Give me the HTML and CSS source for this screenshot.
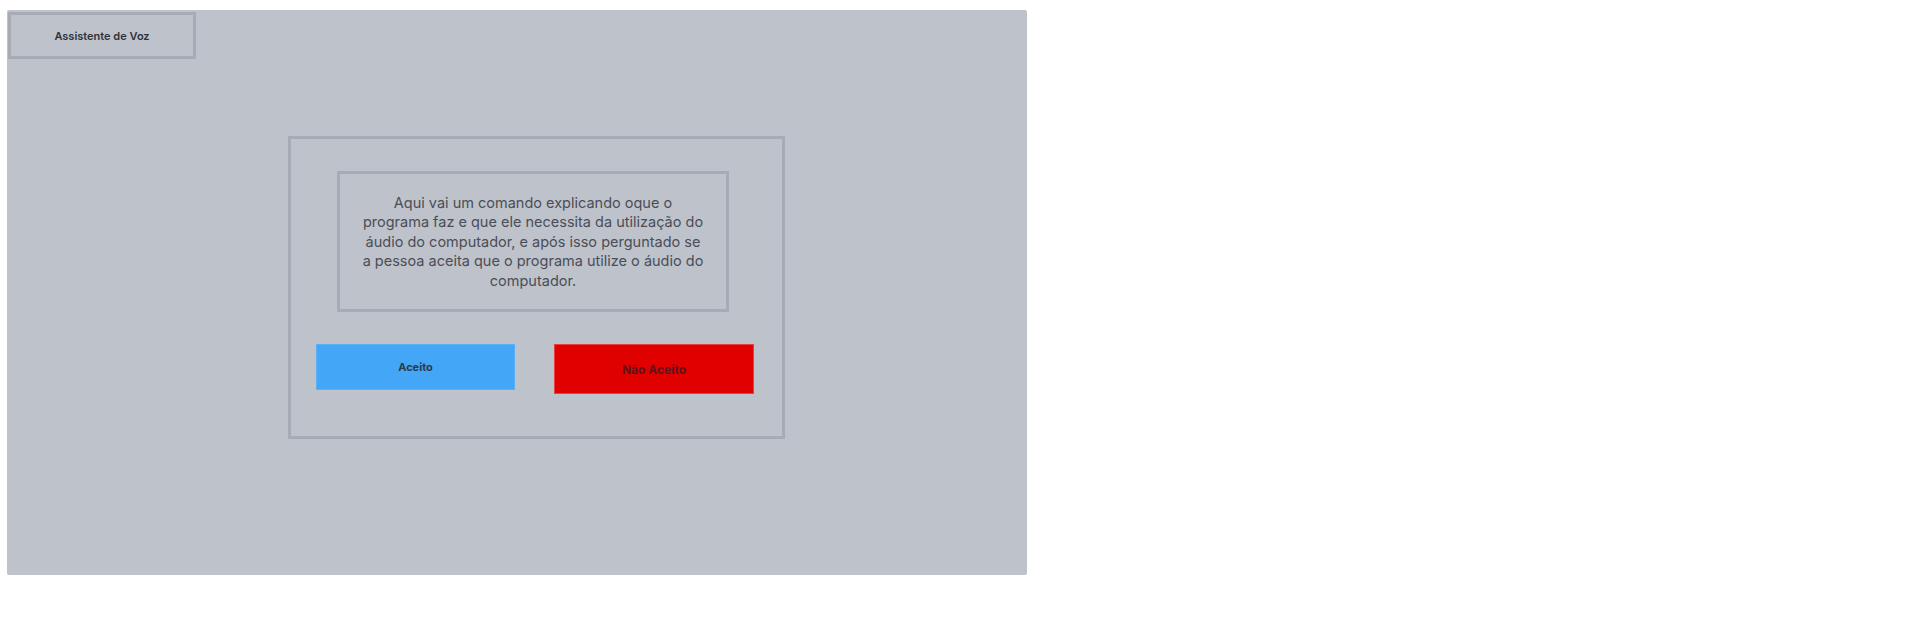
FILE: index.html
```html
<!DOCTYPE html>
<html lang="pt">
<head>
<meta charset="utf-8">
<title>Assistente de Voz</title>
<link rel="stylesheet" href="styles.css">
</head>
<body>
<div class="panel">
  <div class="header">Assistente de Voz</div>
  <div class="dialog">
    <div class="message">Aqui vai um comando explicando oque o programa faz e que ele necessita da utilização do áudio do computador, e após isso perguntado se a pessoa aceita que o programa utilize o áudio do computador.</div>
    <div class="actions">
      <button class="btn btn-accept">Aceito</button>
      <button class="btn btn-reject">Não Aceito</button>
    </div>
  </div>
</div>
</body>
</html>
```

FILE: styles.css
```css
html, body {
  margin: 0;
  background: #ffffff;
}
body {
  padding: 10px 0 0 7px;
  font-family: Inter, "Liberation Sans", sans-serif;
}
.panel {
  width: 1020px;
  height: 565px;
  background: #bec2cb;
  border-radius: 2px;
  box-sizing: border-box;
  padding: 2px 0 0 1px;
}
.header {
  width: 188px;
  height: 47px;
  box-sizing: border-box;
  border: 3px solid #a7abb6;
  display: flex;
  align-items: center;
  justify-content: center;
  font-size: 11px;
  font-weight: 600;
  color: #2f3238;
}
.dialog {
  width: 497px;
  height: 303px;
  box-sizing: border-box;
  margin: 77px 0 0 280px;
  border: 3px solid #a7abb6;
  padding: 32px 0 0 0;
}
.message {
  width: 392px;
  height: 141px;
  box-sizing: border-box;
  margin-left: 46px;
  border: 3px solid #a7abb6;
  display: flex;
  align-items: center;
  justify-content: center;
  text-align: center;
  padding: 0 20px;
  font-size: 14.5px;
  line-height: 19.6px;
  color: #4b4e56;
}
.actions {
  display: flex;
  align-items: flex-start;
  gap: 39px;
  margin: 32px 0 0 25px;
}
.btn {
  font-family: Inter, "Liberation Sans", sans-serif;
  font-size: 11px;
  font-weight: 700;
  border: 0;
  padding: 0;
  cursor: pointer;
}
.btn-accept {
  width: 199px;
  height: 46px;
  background: #44a6f6;
  color: #2c3a4c;
  border: 1px solid #5ab0f0;
}
.btn-reject {
  width: 200px;
  height: 50px;
  background: #e00000;
  color: #5e1419;
  font-size: 12px;
  border: 1px solid #e84040;
}
```
